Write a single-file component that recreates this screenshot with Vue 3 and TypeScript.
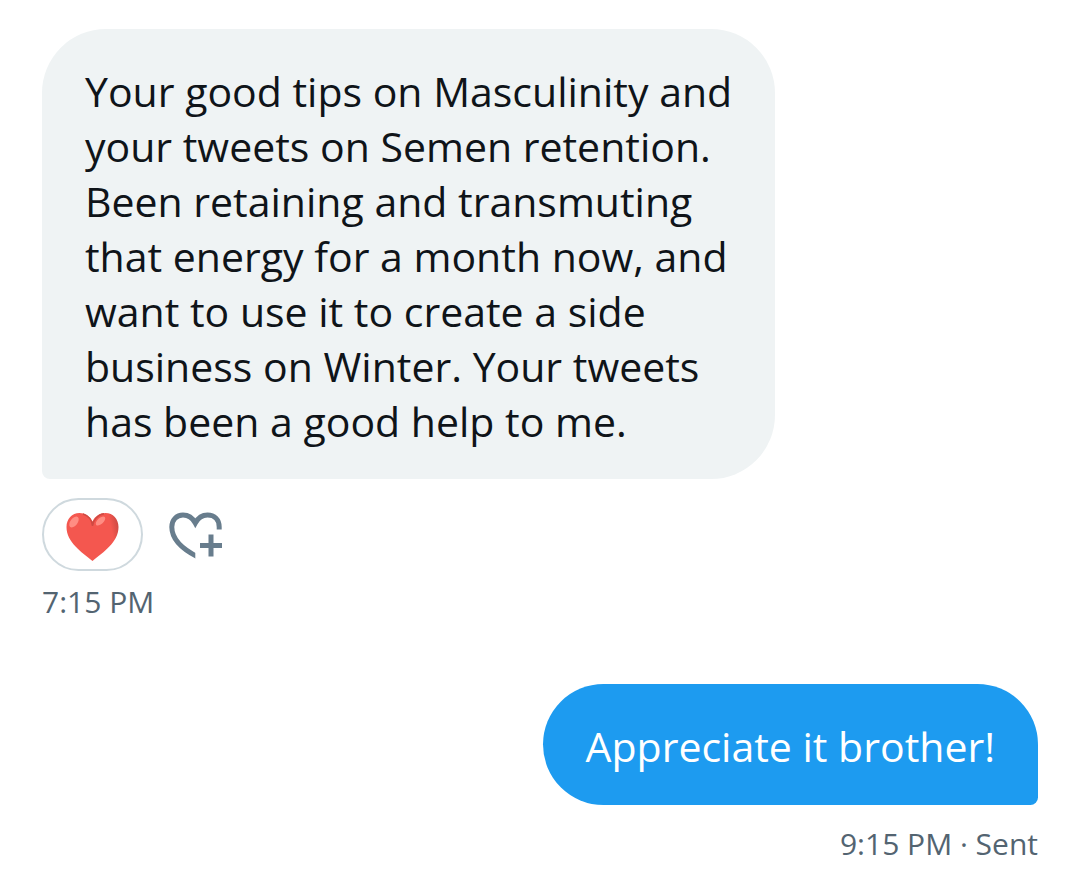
<script setup lang="ts">
interface Message {
  id: number
  own: boolean
  lines: string[]
  time: string
  status?: string
  liked?: boolean
}

const messages: Message[] = [
  {
    id: 1,
    own: false,
    lines: [
      'Your good tips on Masculinity and',
      'your tweets on Semen retention.',
      'Been retaining and transmuting',
      'that energy for a month now, and',
      'want to use it to create a side',
      'business on Winter. Your tweets',
      'has been a good help to me.',
    ],
    time: '7:15 PM',
    liked: true,
  },
  {
    id: 2,
    own: true,
    lines: ['Appreciate it brother!'],
    time: '9:15 PM',
    status: 'Sent',
  },
]
</script>

<template>
  <main class="thread">
    <article v-for="m in messages" :key="m.id" class="message" :class="{ own: m.own }">
      <p class="bubble">{{ m.lines.join('\n') }}</p>
      <div v-if="m.liked" class="reactions">
        <button class="reaction" type="button" aria-label="Heart reaction">
          <svg class="heart" viewBox="0 0 54 48" aria-hidden="true">
            <defs>
              <linearGradient id="shade" x1="0" y1="0.500" x2="1" y2="0.300">
                <stop offset="0.86" stop-color="#f4574f" />
                <stop offset="1" stop-color="#d04a44" />
              </linearGradient>
            </defs>
            <path fill="url(#shade)" d="M26.500 8.500C24 3 19 0 13.500 0C6 0 0.500 6 0.500 14C0.500 29 15.500 39 26.500 48C37.500 39 52.500 29 52.500 14C52.500 6 47 0 39.500 0C34 0 29 3 26.500 8.500Z" />
            <path fill="none" stroke="#cf4a43" stroke-width="1.500" d="M17 1C22 2.500 26 7 26.500 13C27 7 32 1.500 38 0.800" />
            <ellipse cx="8" cy="9" rx="3.600" ry="6.200" fill="#ff8d83" transform="rotate(38 8 9)" />
            <ellipse cx="34.500" cy="8" rx="3" ry="5.800" fill="#ff8d83" transform="rotate(48 34.500 8)" />
          </svg>
        </button>
        <button class="add" type="button" aria-label="Add reaction">
          <svg class="add-icon" viewBox="0 0 54 48" aria-hidden="true">
            <defs>
              <clipPath id="heart-cut">
                <path d="M0 0H54V18.500H26.300V48H0Z" />
              </clipPath>
            </defs>
            <path clip-path="url(#heart-cut)" fill="none" stroke="#687d8d" stroke-width="5" d="M50.200 22V16C50.200 8.500 45.500 4 38.500 4C33 4 29 7 26.300 12C23.600 7 19 4 14 4C7.500 4 2.800 9 2.800 16C2.800 28 12 37.500 29 46" />
            <path fill="none" stroke="#687d8d" stroke-width="5" d="M42 23.500V45.500M31 34.500H53" />
          </svg>
        </button>
      </div>
      <footer class="meta">
        <time>{{ m.time }}</time><span v-if="m.status"> · {{ m.status }}</span>
      </footer>
    </article>
  </main>
</template>

<style>
body {
  margin: 0;
  background: #fff;
}
</style>

<style scoped>
.thread {
  display: flex;
  flex-direction: column;
  gap: 62px;
  padding: 29px 42px 16px;
  font-family: "Open Sans", "Noto Sans", sans-serif;
}

.message {
  display: flex;
  flex-direction: column;
  align-items: flex-start;
}

.message.own {
  align-items: flex-end;
}

.bubble {
  margin: 0;
  padding: 35px 43px 30px;
  border-radius: 64px 64px 64px 8px;
  background: #eff3f4;
  color: #0f1419;
  font-size: 41px;
  line-height: 55px;
  white-space: pre-line;
}

.own .bubble {
  padding-bottom: 31px;
  border-radius: 64px 64px 8px 64px;
  background: #1d9bf0;
  color: #fff;
}

.reactions {
  display: flex;
  align-items: center;
  gap: 26px;
  margin-top: 19px;
}

.reaction,
.add {
  display: flex;
  align-items: center;
  justify-content: center;
  padding: 0;
  background: none;
  cursor: pointer;
}

.reaction {
  box-sizing: border-box;
  width: 101px;
  height: 73px;
  padding-top: 4px;
  border: 2px solid #cfd9de;
  border-radius: 37px;
}

.add {
  border: 0;
}

.heart,
.add-icon {
  width: 54px;
  height: 48px;
}

.meta {
  margin-top: 10px;
  color: #536471;
  font-size: 30px;
  line-height: 41px;
  white-space: pre;
}

.own .meta {
  margin-top: 18px;
}
</style>
